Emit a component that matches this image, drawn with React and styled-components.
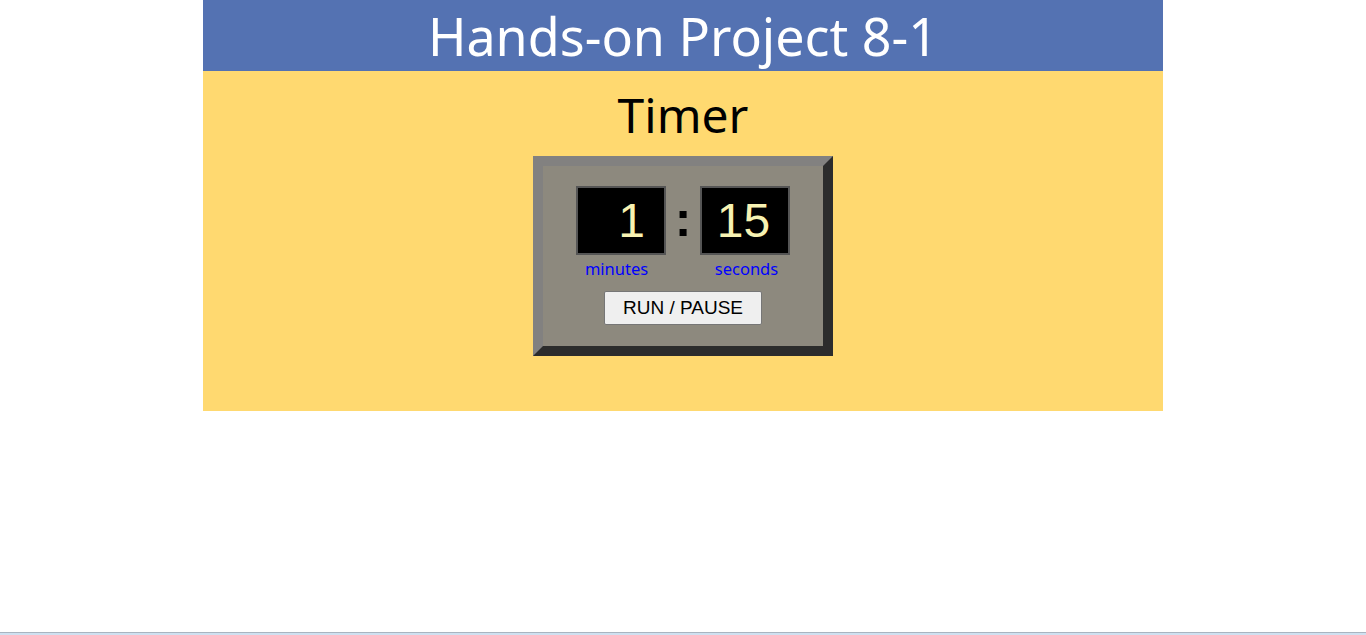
import styled, { createGlobalStyle } from 'styled-components';

const GlobalStyle = createGlobalStyle`
  html, body {
    margin: 0;
    padding: 0;
    background: #ffffff;
  }
  body {
    font-family: "Noto Sans", "DejaVu Sans", sans-serif;
  }
`;

const Page = styled.div`
  min-height: 100vh;
  display: flex;
  flex-direction: column;
`;

const Article = styled.div`
  width: 960px;
  margin: 0 auto;
`;

const Header = styled.header`
  background-color: #5472b2;
  height: 71px;
  display: flex;
  align-items: center;
  justify-content: center;
`;

const Title = styled.h1`
  margin: 0;
  color: #ffffff;
  font-weight: normal;
  font-size: 52px;
  line-height: 71px;
`;

const Section = styled.section`
  background-color: #ffd970;
  height: 340px;
  display: flex;
  flex-direction: column;
  align-items: center;
`;

const SubTitle = styled.h2`
  margin: 14px 0 0;
  font-weight: normal;
  font-size: 48px;
  line-height: 60px;
  color: #000000;
`;

const TimerFrame = styled.div`
  margin-top: 11px;
  width: 280px;
  height: 180px;
  box-sizing: content-box;
  background-color: #8d897e;
  border: 10px solid;
  border-color: #828180 #2c2c2c #2c2c2c #828180;
  display: flex;
  flex-direction: column;
  align-items: center;
`;

const DisplayRow = styled.div`
  margin-top: 20px;
  display: flex;
  align-items: center;
`;

const DigitBox = styled.div`
  width: 86px;
  height: 65px;
  background-color: #000000;
  border: 2px solid #555555;
  display: flex;
  align-items: center;
  justify-content: center;
  font-family: "Liberation Sans", Arial, sans-serif;
  font-size: 48px;
  color: #f7f2b2;
`;

const Digits = styled.span`
  display: inline-block;
  min-width: 1.9ch;
  text-align: right;
  line-height: 1;
  padding-right: 3px;
`;

const Colon = styled.span`
  width: 34px;
  text-align: center;
  font-family: "Liberation Sans", Arial, sans-serif;
  font-weight: bold;
  font-size: 50px;
  line-height: 1;
  color: #000000;
  padding-bottom: 4px;
`;

const LabelRow = styled.div`
  display: flex;
  gap: 34px;
  padding-top: 3px;
`;

const Label = styled.span`
  width: 90px;
  text-align: center;
  color: #0000ff;
  font-size: 16.5px;
  line-height: 22px;
  margin-left: ${(p) => p.$shift || 0}px;
`;

const RunButton = styled.button`
  margin-top: 11px;
  width: 158px;
  height: 34px;
  background-color: #efefef;
  border: 1px solid #767676;
  border-radius: 2px;
  font-family: "Liberation Sans", Arial, sans-serif;
  font-size: 19px;
  color: #000000;
  padding: 0;
  cursor: pointer;
`;

const BottomEdge = styled.div`
  margin-top: auto;
  height: 2px;
  border-top: 1px solid #a9b4c0;
  background-color: #cfe0f0;
`;

export default function App() {
  const minutes = 1;
  const seconds = 15;

  return (
    <Page>
      <GlobalStyle />
      <Article>
        <Header>
          <Title>Hands-on Project 8-1</Title>
        </Header>
        <Section>
          <SubTitle>Timer</SubTitle>
          <TimerFrame>
            <DisplayRow>
              <DigitBox>
                <Digits>{minutes}</Digits>
              </DigitBox>
              <Colon>:</Colon>
              <DigitBox>
                <Digits>{seconds}</Digits>
              </DigitBox>
            </DisplayRow>
            <LabelRow>
              <Label $shift={-3}>minutes</Label>
              <Label $shift={6}>seconds</Label>
            </LabelRow>
            <RunButton>RUN / PAUSE</RunButton>
          </TimerFrame>
        </Section>
      </Article>
      <BottomEdge />
    </Page>
  );
}
